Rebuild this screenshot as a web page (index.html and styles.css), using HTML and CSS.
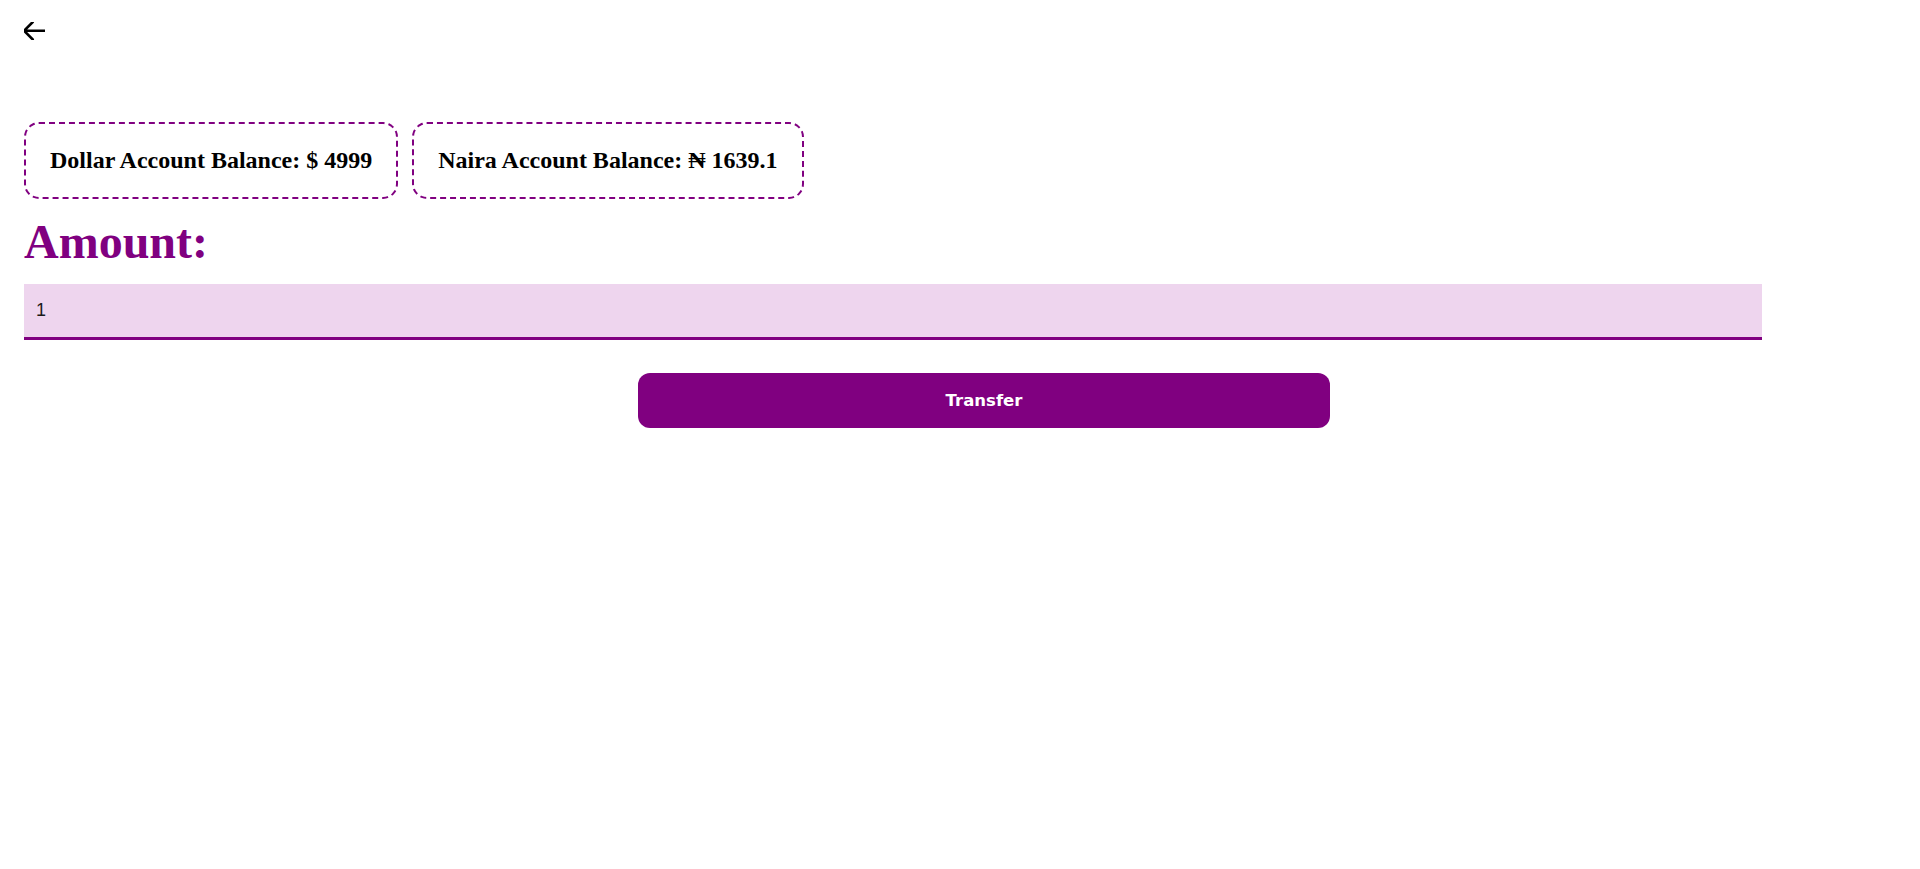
FILE: index.html
```html
<!DOCTYPE html>
<html lang="en">
<head>
<meta charset="utf-8">
<title>Transfer</title>
<link rel="stylesheet" href="styles.css">
</head>
<body>
<div class="page">
  <div class="topbar">
    <button class="back" type="button" aria-label="Back">
      <svg class="back-icon" viewBox="3 4.5 18 15" width="21" height="17.5" fill="none" stroke="currentColor" stroke-width="2.2" stroke-linecap="round" stroke-linejoin="round">
        <path d="M10.5 19.5 3 12m0 0 7.5-7.5M3 12h18"/>
      </svg>
    </button>
  </div>
  <div class="balances">
    <div class="balance-card"><h2 class="balance-text">Dollar Account Balance: $ 4999</h2></div>
    <div class="balance-card"><h2 class="balance-text">Naira Account Balance: ₦ 1639.1</h2></div>
  </div>
  <form class="transfer-form">
    <label class="amount-label" for="amount">Amount:</label>
    <input class="amount-input" id="amount" type="text" value="1">
    <div class="actions">
      <button class="transfer-btn" type="button">Transfer</button>
    </div>
  </form>
</div>
</body>
</html>
```

FILE: styles.css
```css
html, body {
  margin: 0;
  padding: 0;
  background: #ffffff;
  overflow-x: hidden;
}

body {
  font-family: "Liberation Serif", "Times New Roman", serif;
  color: #000;
}

.page {
  padding-left: 24px;
}

.topbar {
  box-sizing: border-box;
  height: 122px;
  padding-top: 22px;
}

.back {
  display: block;
  padding: 0;
  margin: 0;
  border: 0;
  background: none;
  color: #000;
  cursor: pointer;
  line-height: 0;
}

.back-icon {
  display: block;
}

.balances {
  display: flex;
  gap: 14px;
}

.balance-card {
  border: 2px dashed #800080;
  border-radius: 15px;
  padding: 23px 24px;
}

.balance-text {
  margin: 0;
  font-family: "Liberation Serif", "DejaVu Serif", serif;
  font-size: 24px;
  font-weight: 700;
  line-height: normal;
  white-space: nowrap;
}

.transfer-form {
  display: flex;
  flex-direction: column;
  align-items: flex-start;
}

.amount-label {
  display: block;
  margin: 15px 0 15px;
  font-family: "Liberation Serif", serif;
  font-size: 48px;
  font-weight: 700;
  line-height: normal;
  color: #800080;
}

.amount-input {
  box-sizing: border-box;
  width: 1738px;
  height: 56px;
  margin: 0;
  padding: 0 12px;
  border: 0;
  border-bottom: 3px solid #800080;
  background: #eed5ee;
  font-family: "Liberation Sans", Arial, sans-serif;
  font-size: 18px;
  color: #1a1a1a;
  outline: none;
}

.actions {
  width: 100vw;
  display: flex;
  justify-content: center;
  margin-top: 33px;
}

.transfer-btn {
  width: 692px;
  height: 55px;
  border: 0;
  border-radius: 12px;
  background: #800080;
  color: #fff;
  font-family: "DejaVu Sans", "Liberation Sans", sans-serif;
  font-size: 16.5px;
  font-weight: 700;
  cursor: pointer;
}
```
